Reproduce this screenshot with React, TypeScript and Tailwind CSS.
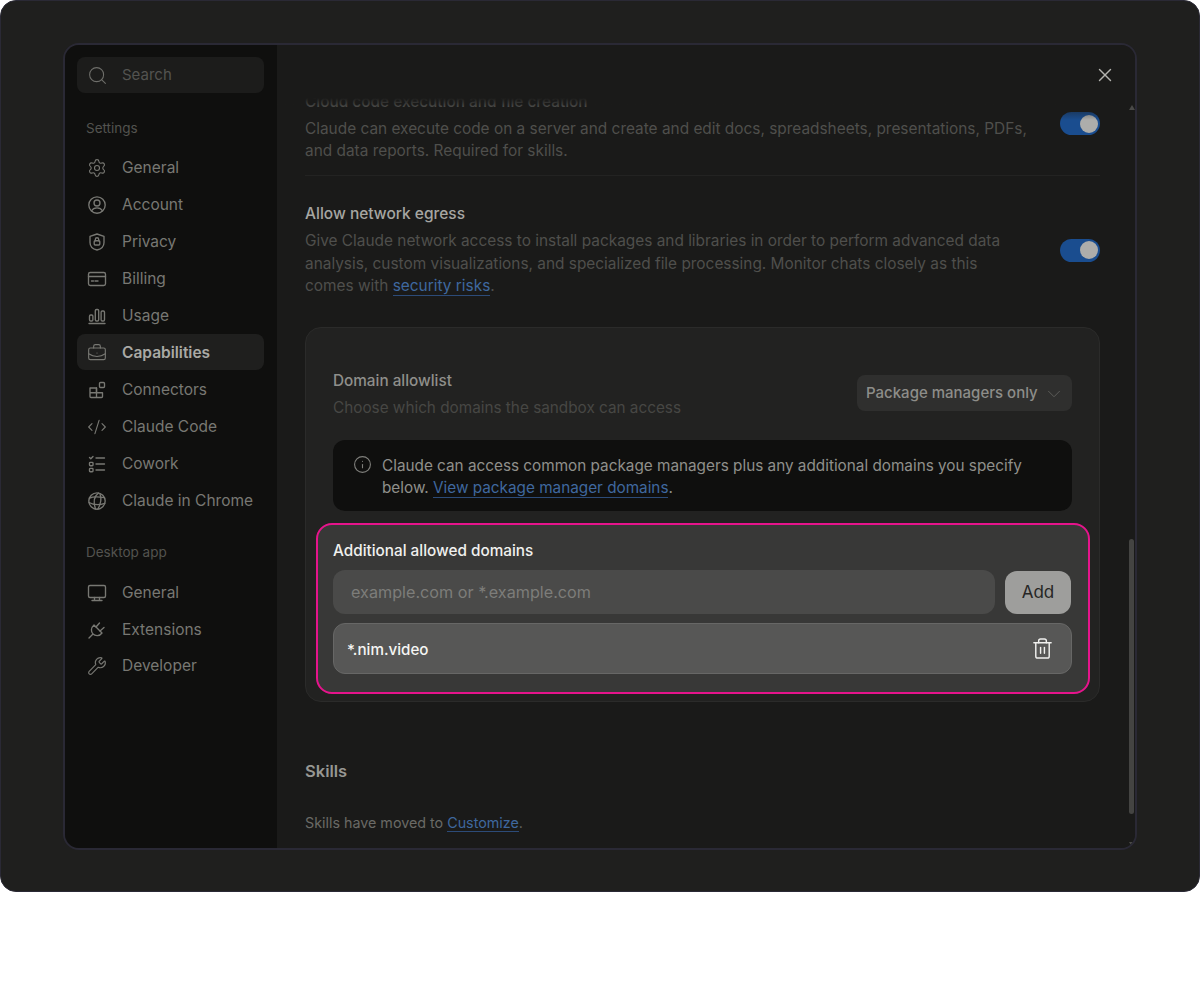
import { BriefcaseBusiness, ChevronDown, CodeXml, Info, Search, Settings, Trash2, Wrench, X } from "lucide-react";
import type { ReactNode } from "react";

const iconProps = {
	width: 20,
	height: 20,
	viewBox: "0 0 20 20",
	fill: "none",
	stroke: "currentColor",
	strokeWidth: 1.35,
	strokeLinecap: "round" as const,
	strokeLinejoin: "round" as const,
};

const AccountIcon = () => (
	<svg {...iconProps}>
		<circle cx="10" cy="10" r="8.2" />
		<circle cx="10" cy="8" r="3" />
		<path d="M4.6 15.8c1-2 3-3 5.4-3s4.400 1 5.400 3" />
	</svg>
);

const PrivacyIcon = () => (
	<svg {...iconProps}>
		<path d="M10 2l7 2.400v6c0 4-3 6.600-7 7.600-4-1-7-3.600-7-7.600v-6z" />
		<rect x="7.200" y="8.700" width="5.600" height="4.300" rx="1" />
		<path d="M8.300 8.700V7.400a1.700 1.700 0 0 1 3.400 0v1.300" />
	</svg>
);

const BillingIcon = () => (
	<svg {...iconProps}>
		<rect x="1.500" y="3.500" width="17" height="13" rx="1.800" />
		<path d="M1.500 7.500h17M4.500 12h2M8 12h3" />
	</svg>
);

const UsageIcon = () => (
	<svg {...iconProps}>
		<rect x="2.500" y="9" width="3.400" height="6" rx="1.200" />
		<rect x="8.300" y="3.500" width="3.400" height="11.500" rx="1.200" />
		<rect x="14.100" y="5" width="3.400" height="10" rx="1.200" />
		<path d="M2 17.500h16" />
	</svg>
);

const ConnectorsIcon = () => (
	<svg {...iconProps}>
		<path d="M3 8h6.500v9.500H4a1 1 0 0 1-1-1zM3 12.700h12.500V16.500a1 1 0 0 1-1 1H9.500" />
		<path d="M9.500 12.700V8" />
		<rect x="12.500" y="2.500" width="5" height="5" rx="1" />
	</svg>
);

const CoworkIcon = () => (
	<svg {...iconProps}>
		<path d="M2.500 3.500l1.300 1.300 2.200-2.300M9 4h8.500M9 10h8.500M9 16h8.500" />
		<rect x="2.500" y="8.300" width="3.500" height="3.400" rx="0.800" />
		<rect x="2.500" y="14.300" width="3.500" height="3.400" rx="0.800" />
	</svg>
);

const GlobeIcon = () => (
	<svg {...iconProps}>
		<circle cx="10" cy="10" r="8.200" />
		<path d="M2.600 7c3-1.200 8-1.500 14.500-.3M2 11.500c4.500 2.500 10 2.800 15.800.8" />
		<path d="M11.500 2c-4 3-5.500 9-3 16M13 2.800c1.600 5 .8 10.500-2 15" />
	</svg>
);

const MonitorIcon = () => (
	<svg {...iconProps}>
		<rect x="1.500" y="2.500" width="17" height="12" rx="1.500" />
		<path d="M7.500 14.500v3M12.500 14.500v3M5 17.500h10" />
	</svg>
);

const PlugIcon = () => (
	<svg {...iconProps}>
		<path d="M7 5l8 8c-2.500 3.500-7 3-9 1S3.500 8 7 5z" />
		<path d="M9 7l3.500-4M13 11l4-3.500M5.500 14.500L2 18" />
	</svg>
);

interface NavItemProps {
	readonly icon: ReactNode;
	readonly label: string;
	readonly active?: boolean;
}

const NavItem = ({ icon, label, active }: NavItemProps) => (
	<div
		className={`flex h-9 items-center gap-[15px] rounded-lg px-[10px] pt-[2px] text-[15.500px] whitespace-nowrap ${
			active ? "bg-[#1f1f1e] font-semibold text-[#a9a9a5]" : "text-[#787873]"
		}`}
	>
		<span className="flex w-[20px] justify-center text-[#787873]">{icon}</span>
		{label}
	</div>
);

const Toggle = () => (
	<div className="flex h-[23px] w-[40px] shrink-0 items-center justify-end rounded-full bg-[#1a4d8f] pr-[2px]">
		<div className="h-[18px] w-[18px] rounded-full bg-[#adadab]" />
	</div>
);

const Sidebar = () => (
	<aside className="flex w-[212px] shrink-0 flex-col bg-[#0f0f0e] pt-3 pr-[13px] pl-3">
		<div className="flex h-9 items-center gap-[14px] rounded-lg bg-[#1c1c1b] px-[10px] pt-[1px] text-[15px] text-[#535350]">
			<Search
				size={21}
				strokeWidth={1.200}
				className="text-[#6e6e6a]"
			/>
			Search
		</div>
		<div className="mt-[25px] mb-[11px] px-[9px] text-[13.500px] leading-5 text-[#53534f]">Settings</div>
		<nav className="flex flex-col gap-[1px]">
			<NavItem
				icon={<Settings size={20} strokeWidth={1.350} />}
				label="General"
			/>
			<NavItem
				icon={<AccountIcon />}
				label="Account"
			/>
			<NavItem
				icon={<PrivacyIcon />}
				label="Privacy"
			/>
			<NavItem
				icon={<BillingIcon />}
				label="Billing"
			/>
			<NavItem
				icon={<UsageIcon />}
				label="Usage"
			/>
			<NavItem
				active
				icon={<BriefcaseBusiness size={20} strokeWidth={1.350} />}
				label="Capabilities"
			/>
			<NavItem
				icon={<ConnectorsIcon />}
				label="Connectors"
			/>
			<NavItem
				icon={<CodeXml size={20} strokeWidth={1.350} />}
				label="Claude Code"
			/>
			<NavItem
				icon={<CoworkIcon />}
				label="Cowork"
			/>
			<NavItem
				icon={<GlobeIcon />}
				label="Claude in Chrome"
			/>
		</nav>
		<div className="mt-[24px] mb-[12px] px-[9px] text-[13.500px] leading-5 text-[#53534f]">Desktop app</div>
		<nav className="flex flex-col gap-[0.500px]">
			<NavItem
				icon={<MonitorIcon />}
				label="General"
			/>
			<NavItem
				icon={<PlugIcon />}
				label="Extensions"
			/>
			<NavItem
				icon={<Wrench size={20} strokeWidth={1.350} />}
				label="Developer"
			/>
		</nav>
	</aside>
);

const DomainCard = () => (
	<div className="mt-[29.500px] rounded-2xl border border-[#2b2b2a] bg-[#222221] px-[27px] pt-[41px] pb-[7px]">
		<div className="flex items-start justify-between">
			<div>
				<div className="text-[15.300px] leading-[24px] font-medium text-[#8f8f8b]">Domain allowlist</div>
				<div className="mt-[3px] text-[15.300px] leading-[24px] text-[#474744]">Choose which domains the sandbox can access</div>
			</div>
			<div className="mt-[6px] flex h-[36px] w-[215px] items-center gap-[5px] rounded-lg bg-[#2f2f2e] px-[9px] pt-[1px] text-[15px] font-medium whitespace-nowrap text-[#8d8d89]">
				Package managers only
				<ChevronDown
					size={22}
					strokeWidth={1}
					className="shrink-0 text-[#5f5f5c]"
				/>
			</div>
		</div>
		<div className="mt-[20px] flex gap-[10px] rounded-xl bg-[#0f0f0e] pt-[15px] pr-[20px] pb-[12px] pl-[20px] text-[15.300px] leading-[22px] text-[#8f8f8b]">
			<Info
				size={19}
				strokeWidth={1.400}
				className="shrink-0 text-[#7f7f7b]"
			/>
			<p>
				Claude can access common package managers plus any additional domains you specify below.{" "}
				<a className="border-b border-[#2c4b78] text-[#3f689f]">View package manager domains</a>.
			</p>
		</div>
		<div className="-mr-[18px] -ml-[17px] mt-[12px] rounded-2xl border-2 border-[#e6148c] bg-[#383837] pt-[15px] pr-[16px] pb-[18px] pl-[15px]">
			<div className="text-[15.300px] leading-[22px] font-medium text-[#f0f0ee]">Additional allowed domains</div>
			<div className="mt-[8px] flex items-end gap-[10px] pr-[1px]">
				<div className="flex h-[44px] flex-1 items-center rounded-xl bg-[#4a4a49] px-[18px] text-[16.200px] text-[#7d7d7a]">example.com or *.example.com</div>
				<div className="flex h-[43px] w-[66px] items-center justify-center rounded-xl bg-[#9e9e9c] text-[17px] text-[#262625]">Add</div>
			</div>
			<div className="mt-[9px] flex h-[51px] items-center justify-between rounded-xl border border-[#676766] bg-[#575756] pr-[17px] pl-[13px] text-[15.200px] font-medium text-[#f5f5f3]">
				<span className="pt-[3px]">*.nim.video</span>
				<Trash2
					size={23}
					strokeWidth={1.500}
					className="text-[#f0f0ee]"
				/>
			</div>
		</div>
	</div>
);

const Content = () => (
	<main className="relative flex min-w-0 flex-1 flex-col bg-[#1a1a19]">
		<div className="flex h-[53px] shrink-0 items-start justify-end pt-[19px] pr-[19px]">
			<X
				size={22}
				strokeWidth={1.500}
				className="text-[#b3b3af]"
			/>
		</div>
		<div className="min-h-0 flex-1 overflow-hidden pr-[35px] pl-[28px]">
			<div className="-mt-[7px]">
				<div className="flex items-start justify-between gap-[20px] border-b border-[#232322] pb-[13px]">
					<div>
						<div className="text-[15.400px] leading-[22px] font-medium text-[#8f8f8b]">Cloud code execution and file creation</div>
						<p className="mt-[5px] text-[15.400px] leading-[22px] text-[#4f4f4c]">
							Claude can execute code on a server and create and edit docs, spreadsheets, presentations, PDFs, and data reports. Required for skills.
						</p>
					</div>
					<div className="mt-[21px]">
						<Toggle />
					</div>
				</div>
				<div className="mt-[27px] flex items-center justify-between gap-[20px]">
					<div>
						<div className="text-[15.500px] leading-[22px] font-medium text-[#a6a6a2]">Allow network egress</div>
						<p className="mt-[5px] max-w-[700px] text-[15.400px] leading-[22.500px] text-[#4f4f4c]">
							Give Claude network access to install packages and libraries in order to perform advanced data analysis, custom visualizations, and specialized file processing. Monitor chats closely as this comes with{" "}
							<a className="border-b border-[#2c4b78] text-[#3f689f]">security risks</a>.
						</p>
					</div>
					<Toggle />
				</div>
				<DomainCard />
				<div className="mt-[57px] text-[16.500px] leading-[24px] font-semibold text-[#979793]">Skills</div>
				<div className="mt-[29px] text-[14.300px] leading-[22px] text-[#6a6a66]">
					Skills have moved to <a className="border-b border-[#2c4b78] text-[#3f689f]">Customize</a>.
				</div>
			</div>
		</div>
		{/* top fade over the scrolled content */}
		<div className="absolute top-[53px] right-[8px] left-0 h-[22px] bg-linear-to-b from-[#1a1a19] to-transparent" />
		{/* scrollbar */}
		<div className="absolute top-[60px] right-0 h-0 w-0 border-x-[3.500px] border-b-[5px] border-x-transparent border-b-[#4a4a48]" />
		<div className="absolute top-[494px] right-[1px] h-[275px] w-[5px] rounded-full bg-[#444442]" />
		<div className="absolute right-0 bottom-[1px] h-0 w-0 border-x-[3.500px] border-t-[5px] border-x-transparent border-t-[#4a4a48]" />
	</main>
);

export default function App() {
	return (
		<div className="h-[988px] w-[1200px] bg-white font-['Inter',sans-serif]">
			<div className="h-[892px] rounded-2xl border border-[#2a2935] bg-[#1f1f1e] px-[62px] pt-[42px]">
				<div className="flex h-[807px] overflow-hidden rounded-2xl border-2 border-[#2a2935]">
					<Sidebar />
					<Content />
				</div>
			</div>
		</div>
	);
}
